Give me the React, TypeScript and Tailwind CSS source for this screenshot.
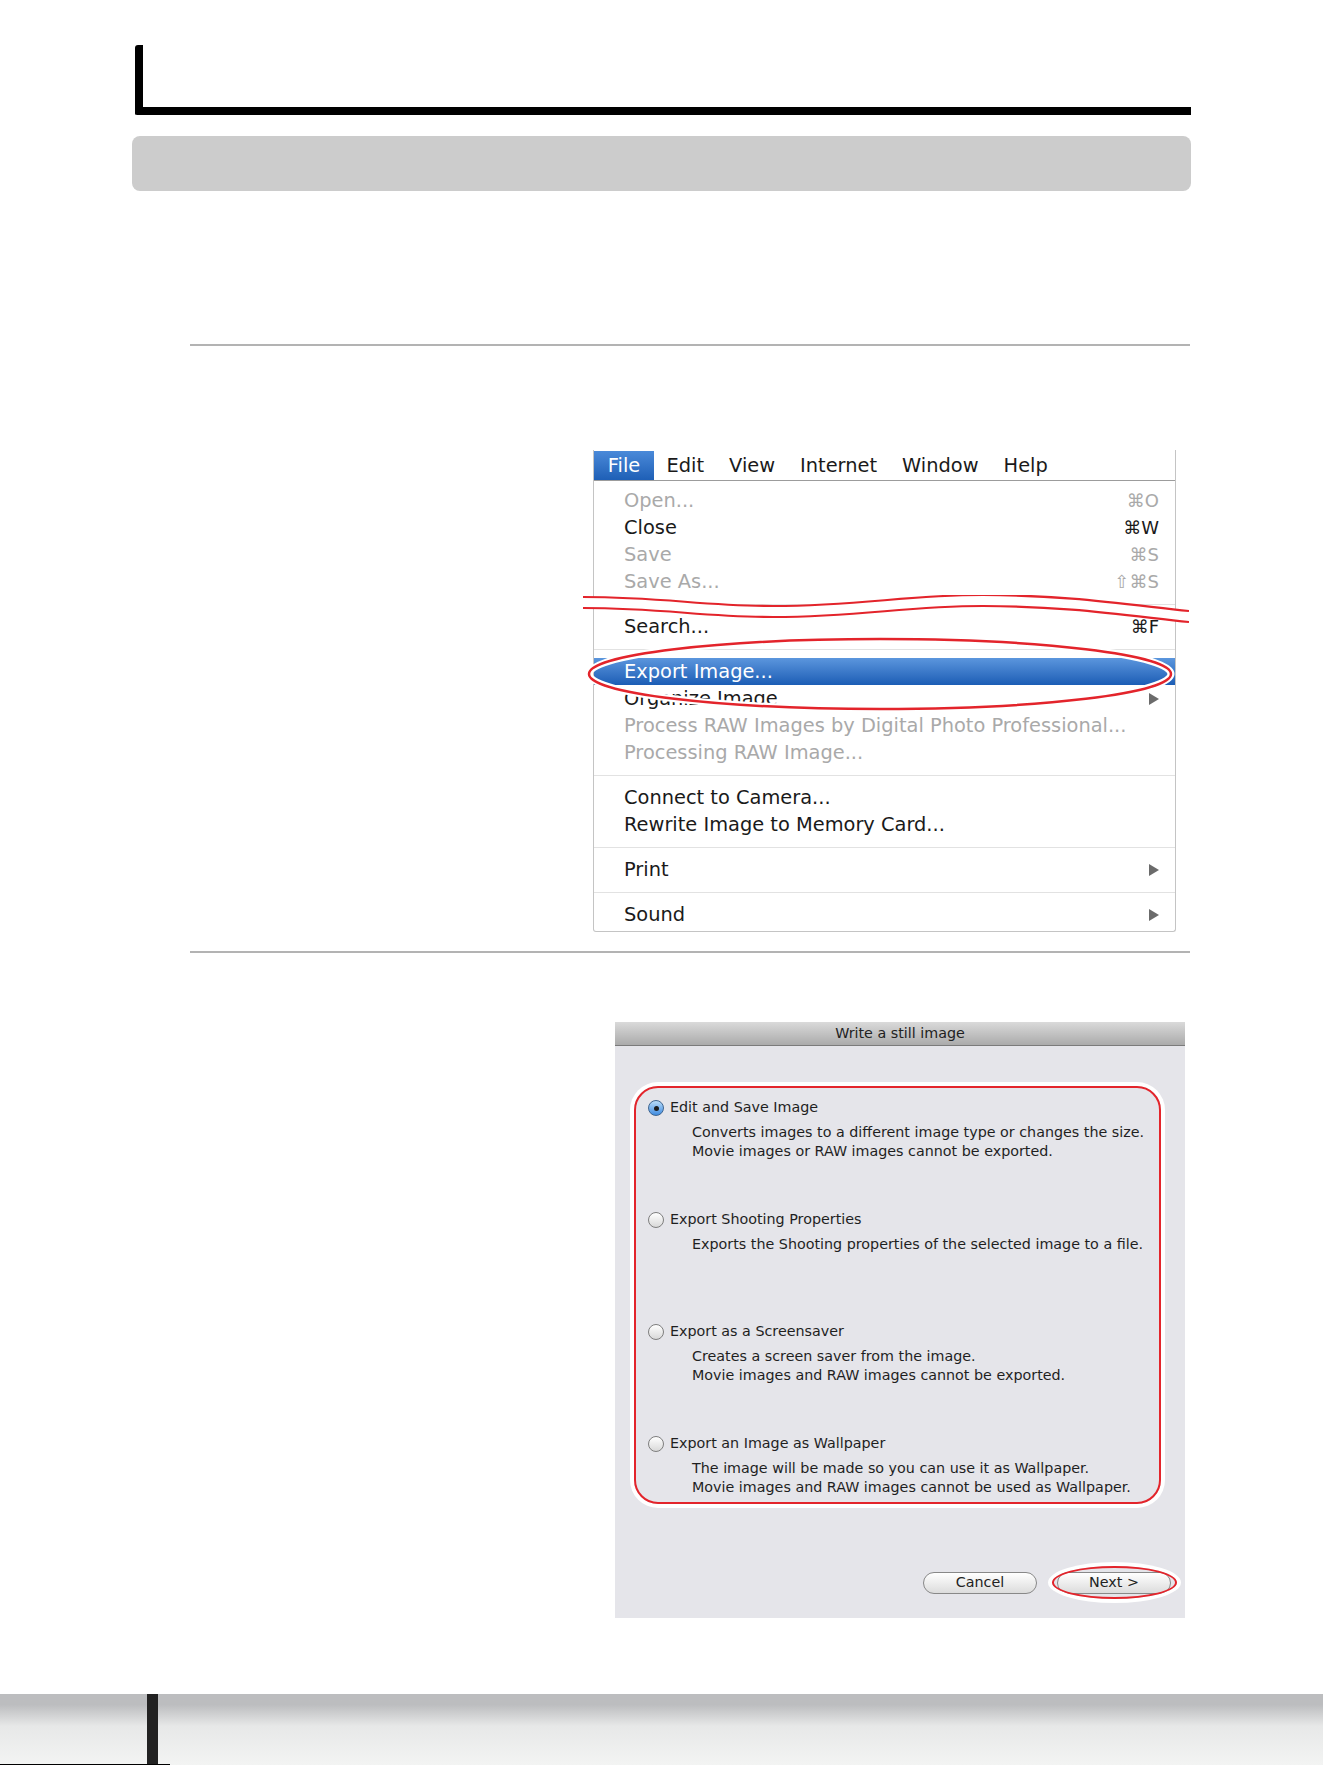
import React from "react";

const menuFont = { fontFamily: '"DejaVu Sans", "Liberation Sans", sans-serif' };

function Arrow() {
  return (
    <svg width="11" height="12" viewBox="0 0 11 12" className="shrink-0">
      <path d="M1 0 L11 6 L1 12 Z" fill="#6b6b6b" />
    </svg>
  );
}

function Row({
  label,
  shortcut,
  disabled,
  arrow,
  active,
}: {
  label: string;
  shortcut?: string;
  disabled?: boolean;
  arrow?: boolean;
  active?: boolean;
}) {
  return (
    <div
      className={
        "h-[27px] flex items-center justify-between pl-[30px] pr-[16px] text-[19.4px] leading-none " +
        (active
          ? "bg-linear-to-b from-[#5b96dd] to-[#1b5db5] text-white"
          : disabled
          ? "text-[#a9a9a9]"
          : "text-[#1a1a1a]")
      }
    >
      <span>{label}</span>
      {shortcut ? <span className="text-[18px]">{shortcut}</span> : null}
      {arrow ? <Arrow /> : null}
    </div>
  );
}

function Sep() {
  return (
    <div className="h-[18px] flex items-center">
      <div className="w-full h-px bg-[#e2e2e2]" />
    </div>
  );
}

function FileMenu() {
  return (
    <div
      className="relative ml-[593px] w-[583px] h-[482px] bg-white border-x border-b border-[#c4c4c4] rounded-b-[3px]"
      style={menuFont}
    >
      <div className="h-[31px] pt-px flex items-stretch border-b border-[#9c9c9c] text-[19.4px] text-[#1a1a1a]">
        <div className="w-[60px] flex items-center justify-center bg-linear-to-b from-[#4a8ad9] to-[#1e5fb6] text-white">
          File
        </div>
        <div className="flex items-center pl-[12.5px] pr-[12.5px]">Edit</div>
        <div className="flex items-center px-[12.5px]">View</div>
        <div className="flex items-center px-[12.5px]">Internet</div>
        <div className="flex items-center px-[12.5px]">Window</div>
        <div className="flex items-center px-[12.5px]">Help</div>
      </div>
      <div className="pt-[6px]">
        <Row label="Open..." shortcut="⌘O" disabled />
        <Row label="Close" shortcut="⌘W" />
        <Row label="Save" shortcut="⌘S" disabled />
        <Row label="Save As..." shortcut="⇧⌘S" disabled />
        <Sep />
        <Row label="Search..." shortcut="⌘F" />
        <Sep />
        <Row label="Export Image..." active />
        <Row label="Organize Image" arrow />
        <Row label="Process RAW Images by Digital Photo Professional..." disabled />
        <Row label="Processing RAW Image..." disabled />
        <Sep />
        <Row label="Connect to Camera..." />
        <Row label="Rewrite Image to Memory Card..." />
        <Sep />
        <Row label="Print" arrow />
        <Sep />
        <Row label="Sound" arrow />
      </div>

      {/* wavy break marker */}
      <svg
        className="absolute left-[-11px] top-[145px]"
        width="606"
        height="34"
        viewBox="0 0 606 34"
      >
        <path
          d="M0,2 C80,2 120,11 190,11 C280,11 320,0 400,0 C480,0 540,9 606,16 L606,27 C540,20 480,11 400,11 C320,11 280,22 190,22 C120,22 80,13 0,13 Z"
          fill="white"
        />
        <path
          d="M0,2 C80,2 120,11 190,11 C280,11 320,0 400,0 C480,0 540,9 606,16"
          fill="none"
          stroke="#e3242b"
          strokeWidth="2.2"
        />
        <path
          d="M0,13 C80,13 120,22 190,22 C280,22 320,11 400,11 C480,11 540,20 606,27"
          fill="none"
          stroke="#e3242b"
          strokeWidth="2.2"
        />
      </svg>

      {/* highlight ellipse */}
      <svg
        className="absolute left-[-12px] top-[182px]"
        width="600"
        height="84"
        viewBox="0 0 600 84"
      >
        <ellipse cx="298" cy="42" rx="291" ry="35" fill="none" stroke="white" strokeWidth="7" />
        <ellipse cx="298" cy="42" rx="291" ry="35" fill="none" stroke="#e3242b" strokeWidth="2.5" />
      </svg>
    </div>
  );
}

function Radio({ checked }: { checked?: boolean }) {
  if (checked) {
    return (
      <div className="w-[16px] h-[16px] rounded-full border border-[#3f6590] bg-linear-to-b from-[#b9dcf8] to-[#3d8be0] flex items-center justify-center shrink-0">
        <div className="w-[5px] h-[5px] rounded-full bg-[#1c1c1c]" />
      </div>
    );
  }
  return (
    <div className="w-[16px] h-[16px] rounded-full border border-[#7e7e7e] bg-linear-to-b from-[#ffffff] to-[#d9d9d9] shrink-0" />
  );
}

function Option({
  title,
  lines,
  checked,
  last,
}: {
  title: string;
  lines: string[];
  checked?: boolean;
  last?: boolean;
}) {
  return (
    <div className={last ? "" : "h-[112px]"}>
      <div className="flex items-center h-[20px] pl-[12px] gap-[6px] text-[14.3px] text-[#1f1f1f]">
        <Radio checked={checked} />
        <span>{title}</span>
      </div>
      <div className="mt-[5px] pl-[56px] text-[14.3px] leading-[19px] text-[#1f1f1f]">
        {lines.map((l) => (
          <div key={l}>{l}</div>
        ))}
      </div>
    </div>
  );
}

function Dialog() {
  return (
    <div
      className="ml-[615px] w-[570px] h-[596px] bg-[#e5e5ea] flex flex-col"
      style={menuFont}
    >
      <div className="h-[24px] pt-px shrink-0 bg-linear-to-b from-[#dadada] to-[#ababab] border-b border-[#7b7b7b] flex items-center justify-center text-[14.3px] text-[#222]">
        Write a still image
      </div>
      <div className="mt-[40px] ml-[19px] w-[527px] h-[418px] rounded-[24px] border-[2.5px] border-[#e3242b] shadow-[0_0_0_4px_#ffffff] pt-[10px]">
        <Option
          checked
          title="Edit and Save Image"
          lines={[
            "Converts images to a different image type or changes the size.",
            "Movie images or RAW images cannot be exported.",
          ]}
        />
        <Option
          title="Export Shooting Properties"
          lines={["Exports the Shooting properties of the selected image to a file."]}
        />
        <Option
          title="Export as a Screensaver"
          lines={[
            "Creates a screen saver from the image.",
            "Movie images and RAW images cannot be exported.",
          ]}
        />
        <Option
          last
          title="Export an Image as Wallpaper"
          lines={[
            "The image will be made so you can use it as Wallpaper.",
            "Movie images and RAW images cannot be used as Wallpaper.",
          ]}
        />
      </div>
      <div className="mt-[68px] flex justify-end gap-[20px] pr-[14px]">
        <div className="w-[114px] h-[22px] rounded-full border border-[#888] bg-linear-to-b from-[#ffffff] to-[#dcdcdc] flex items-center justify-center text-[14.3px] text-[#222]">
          Cancel
        </div>
        <div className="relative w-[114px] h-[22px]">
          <div className="w-full h-full rounded-full border border-[#888] bg-linear-to-b from-[#ffffff] to-[#dcdcdc] flex items-center justify-center text-[14.3px] text-[#222]">
            Next &gt;
          </div>
          <div className="absolute left-[-5px] right-[-6px] top-[-6px] bottom-[-5px] rounded-[50%] border-[2.5px] border-[#e3242b] shadow-[0_0_0_4px_#ffffff]" />
        </div>
      </div>
    </div>
  );
}

export default function App() {
  return (
    <div className="relative w-[1323px] h-[1765px] bg-white overflow-hidden flex flex-col">
      <div className="mt-[45px] ml-[135px] w-[1056px] h-[70px] border-l-[8px] border-b-[8px] border-black rounded-bl-[2px] rounded-tl-[3px]" />
      <div className="mt-[21px] ml-[132px] w-[1059px] h-[55px] rounded-[8px] bg-[#cccccc]" />
      <div className="mt-[153px] ml-[190px] w-[1000px] h-[2px] bg-[#b3b3b3]" />
      <div className="mt-[104px]">
        <FileMenu />
      </div>
      <div className="mt-[19px] ml-[190px] w-[1000px] h-[2px] bg-[#b3b3b3]" />
      <div className="mt-[69px]">
        <Dialog />
      </div>
      <div className="mt-auto relative h-[71px] bg-linear-to-b from-[#bcbdbf] from-15% via-[#e7e8e8] via-45% to-[#f3f4f3]">
        <div className="ml-[147px] w-[11px] h-full bg-[#222]" />
        <div className="absolute left-0 bottom-0 w-[170px] h-px bg-black" />
      </div>
    </div>
  );
}
